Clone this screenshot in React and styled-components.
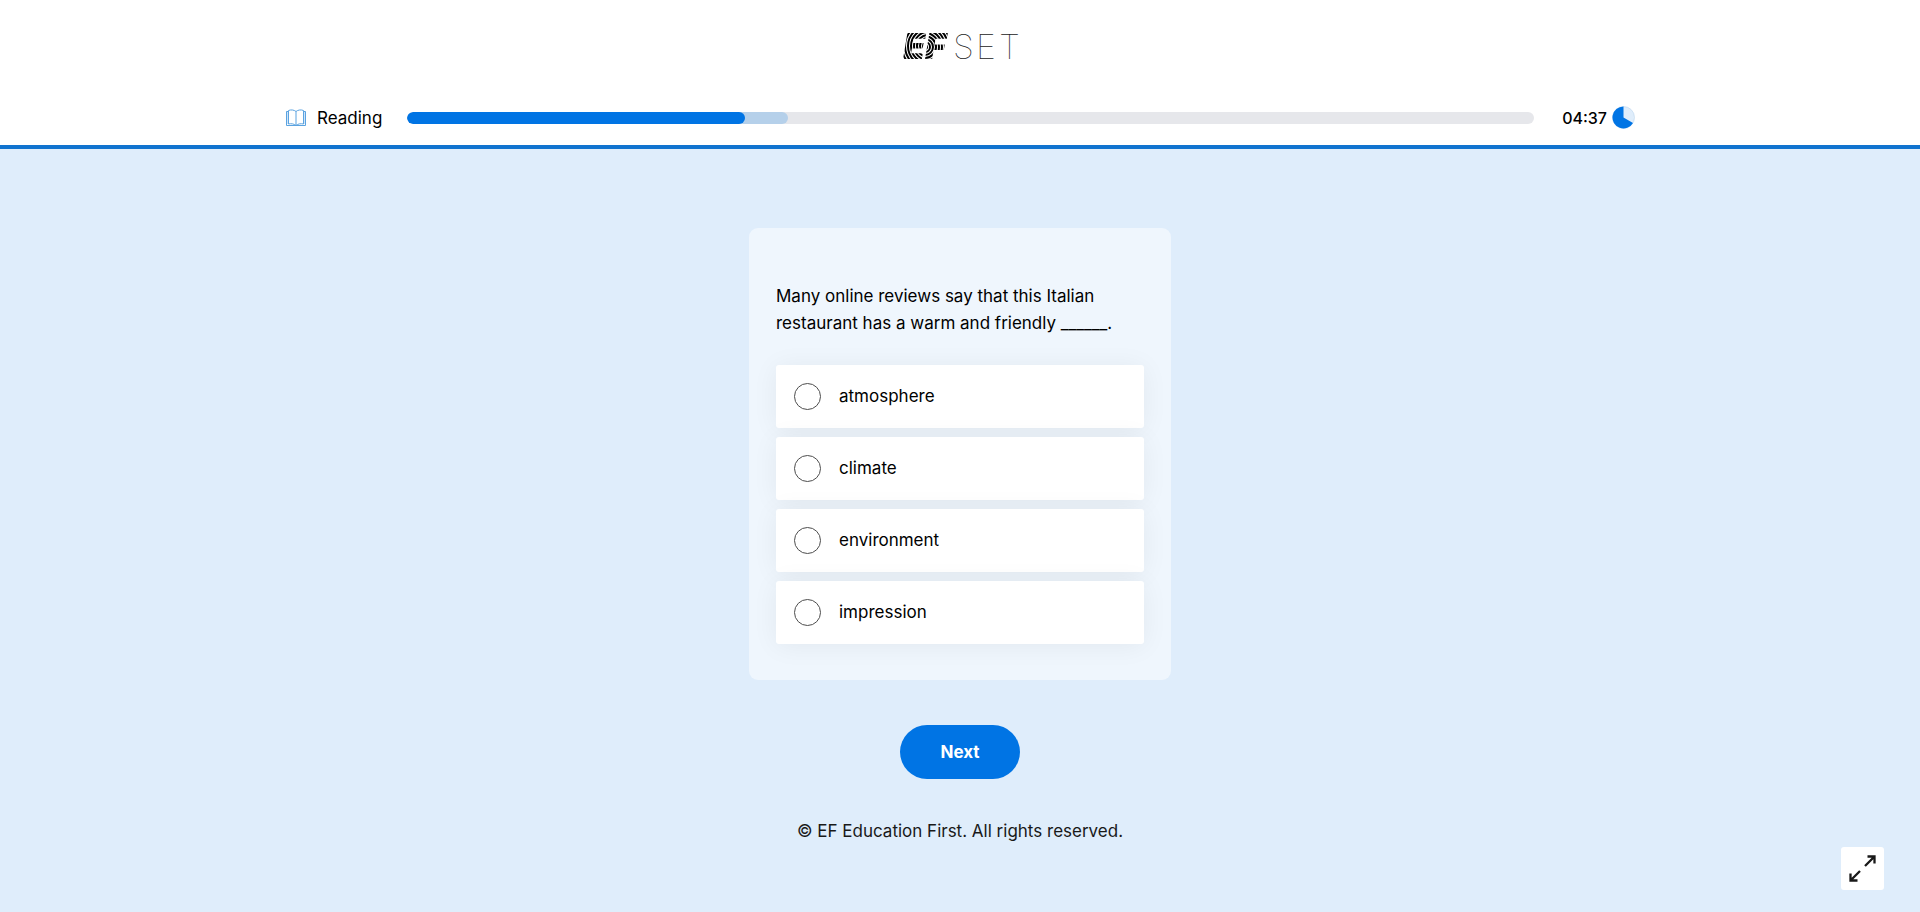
import React, { useState } from "react";
import styled, { createGlobalStyle } from "styled-components";

const colors = {
  blue: "#0074e4",
  line: "#1073cf",
  page: "#dfedfb",
  ink: "#191919",
};

const GlobalStyle = createGlobalStyle`
  * {
    box-sizing: border-box;
  }

  body {
    margin: 0;
    color: black;
    background: ${colors.page};
    font-family: Inter, "Liberation Sans", sans-serif;
    font-size: 17px;
    line-height: 27px;
  }
`;

const Page = styled.div`
  display: flex;
  flex-direction: column;
  min-height: 100vh;
  background: ${colors.page};
`;

const Header = styled.header`
  background: white;
  border-bottom: 4px solid ${colors.line};
`;

const LogoRow = styled.div`
  display: flex;
  justify-content: center;
  padding: 20px 0 32px;
`;

const LogoSvg = styled.svg`
  display: block;
  width: 122px;
  height: 52px;
`;

const StatusBar = styled.div`
  display: flex;
  align-items: center;
  max-width: 1350px;
  height: 27px;
  margin: 0 auto 14px;
`;

const Section = styled.div`
  display: flex;
  align-items: center;
  gap: 11px;
  margin-right: 25px;
`;

const StatusText = styled.span`
  padding-top: 2px;
`;

const Track = styled.div`
  position: relative;
  flex: 1;
  height: 12px;
  overflow: hidden;
  background: #e6e7eb;
  border-radius: 6px;
`;

const Bar = styled.div`
  position: absolute;
  top: 0;
  left: 0;
  height: 100%;
  background: ${(props) => (props.$pending ? "#b5d0ea" : colors.blue)};
  border-radius: 6px;
`;

const Timer = styled.div`
  display: flex;
  align-items: center;
  gap: 5px;
  margin-left: 28px;
  font-size: 16px;
  font-weight: 500;
`;

const Main = styled.main`
  display: flex;
  flex-direction: column;
  align-items: center;
  padding-top: 79px;
`;

const Card = styled.fieldset`
  width: 422px;
  max-width: 100%;
  margin: 0;
  padding: 55px 27px 36px;
  background: #eff6fd;
  border: 0;
  border-radius: 9px;
`;

const Question = styled.p`
  margin: 0 0 28px;
`;

const Options = styled.div`
  display: flex;
  flex-direction: column;
  gap: 9px;
`;

const Option = styled.label`
  display: flex;
  align-items: center;
  gap: 18px;
  padding: 18px;
  background: white;
  border-radius: 3px;
  box-shadow: 0 2px 27px rgba(25, 25, 0, 0.06);
  cursor: pointer;
`;

const Radio = styled.input`
  appearance: none;
  width: 27px;
  height: 27px;
  margin: 0;
  background: white;
  border: 1px solid #4d4d4d;
  border-radius: 50%;

  &:checked {
    border: 8px solid ${colors.blue};
  }
`;

const NextButton = styled.button`
  width: 120px;
  height: 54px;
  margin-top: 45px;
  color: white;
  background: ${colors.blue};
  border: 0;
  border-radius: 27px;
  font: inherit;
  font-weight: 700;
  cursor: pointer;
`;

const Footer = styled.footer`
  padding: 39px 0;
  color: ${colors.ink};
  text-align: center;
`;

const FullscreenButton = styled.button`
  position: fixed;
  right: 36px;
  bottom: 22px;
  display: flex;
  align-items: center;
  justify-content: center;
  width: 43px;
  height: 43px;
  padding: 0;
  background: white;
  border: 0;
  border-radius: 3px;
  cursor: pointer;
`;

const rings = [2, 5, 8, 11, 14, 17, 20, 23, 26];

const Logo = () => (
  <LogoSvg viewBox="-4 -12 122 52" role="img" aria-label="EF SET">
    <defs>
      <clipPath id="letter-e">
        <text x="0" y="27" fontFamily="Inter" fontSize="36" fontWeight="900" fontStyle="italic">
          E
        </text>
      </clipPath>
      <clipPath id="letter-f">
        <text x="22" y="27" fontFamily="Inter" fontSize="36" fontWeight="900" fontStyle="italic">
          F
        </text>
      </clipPath>
    </defs>
    <g clipPath="url(#letter-e)" fill="none" stroke="black" strokeWidth="2">
      {rings.map((r) => (
        <circle key={r} cx="25" cy="14" r={r} />
      ))}
    </g>
    <g clipPath="url(#letter-f)" fill="none" stroke="black" strokeWidth="2">
      {rings.map((r) => (
        <circle key={r} cx="22" cy="15" r={r} />
      ))}
    </g>
    <g fontFamily="Inter" fontSize="34" fontWeight="100" fill="#222">
      <text x="50" y="27">S</text>
      <text x="73" y="27">E</text>
      <text x="96" y="27">T</text>
    </g>
  </LogoSvg>
);

const BookIcon = () => (
  <svg width="21" height="18" viewBox="-1 0 21 18" fill="none" aria-hidden="true">
    <path d="M.5 2.500h2V15H.5zM17.500 2.500h2V15h-2z" fill="#cfe5fa" />
    <path d="M2.500 2.500h-2v14h19v-14h-2" stroke="#5ba3e0" />
    <path
      d="M2.500 15V1.500C5 .5 8 .8 10 2.500c2-1.700 5-2 7.500-1V15c-2.500-.6-5.500-.3-7.500 1.500C8 14.700 5 14.400 2.500 15zM10 2.500v14"
      stroke="#5ba3e0"
    />
  </svg>
);

const PieIcon = () => (
  <svg width="23" height="23" viewBox="0 0 23 23" aria-hidden="true">
    <circle cx="11.500" cy="11.500" r="11" fill={colors.page} stroke="#b5d0ea" strokeWidth=".5" />
    <path d="M11.500 11.500V.5a11 11 0 1 0 9.500 16.500z" fill={colors.blue} />
  </svg>
);

const ExpandIcon = () => (
  <svg width="27" height="27" viewBox="0 0 27 27" fill="none" stroke={colors.ink} strokeWidth="2.300" aria-hidden="true">
    <path d="M16 11L25 2M18.500 1.500h7V8.500M11 16L2 25M1.500 18.500v7h7" />
  </svg>
);

const answers = ["atmosphere", "climate", "environment", "impression"];

const App = () => {
  const [selected, setSelected] = useState(null);

  return (
    <Page>
      <GlobalStyle />
      <Header>
        <LogoRow>
          <Logo />
        </LogoRow>
        <StatusBar>
          <Section>
            <BookIcon />
            <StatusText>Reading</StatusText>
          </Section>
          <Track>
            <Bar $pending style={{ width: "33.8%" }} />
            <Bar style={{ width: "30%" }} />
          </Track>
          <Timer>
            <StatusText>04:37</StatusText>
            <PieIcon />
          </Timer>
        </StatusBar>
      </Header>
      <Main>
        <Card aria-labelledby="question">
          <Question id="question">
            Many online reviews say that this Italian restaurant has a warm and
            friendly ______.
          </Question>
          <Options>
            {answers.map((answer) => (
              <Option key={answer}>
                <Radio
                  type="radio"
                  name="answer"
                  value={answer}
                  checked={selected === answer}
                  onChange={() => setSelected(answer)}
                />
                {answer}
              </Option>
            ))}
          </Options>
        </Card>
        <NextButton type="button">Next</NextButton>
      </Main>
      <Footer>© EF Education First. All rights reserved.</Footer>
      <FullscreenButton type="button" aria-label="Full screen">
        <ExpandIcon />
      </FullscreenButton>
    </Page>
  );
};

export default App;
